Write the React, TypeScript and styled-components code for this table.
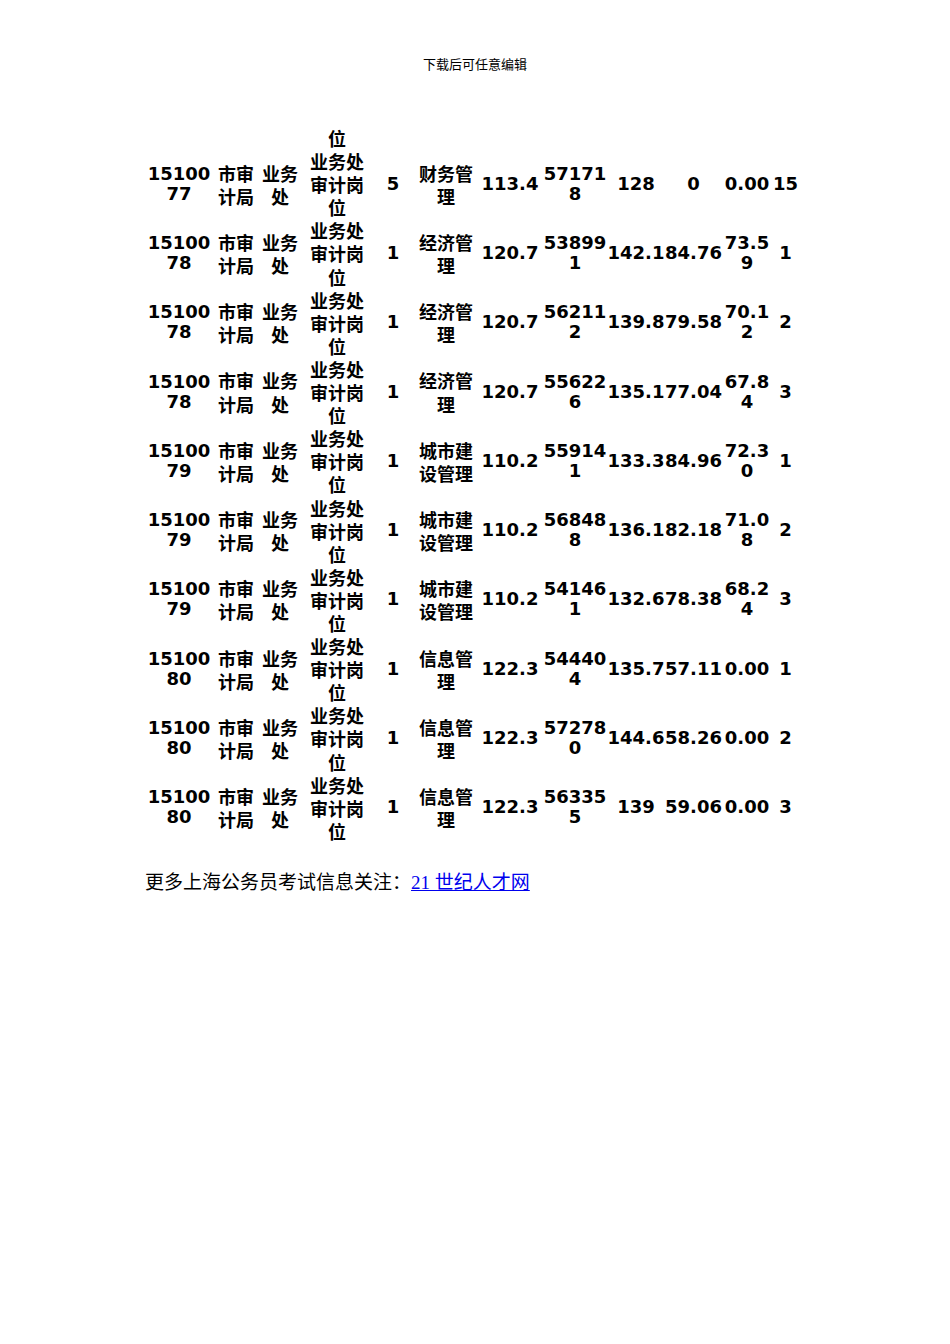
import styled, { createGlobalStyle } from "styled-components";

const GlobalStyle = createGlobalStyle`
  body {
    margin: 0;
    background: #ffffff;
    color: #000000;
  }
`;

const Page = styled.div`
  width: 950px;
  min-height: 1344px;
  background: #ffffff;
`;

const Header = styled.div`
  padding-top: 55px;
  text-align: center;
  font-family: "Noto Sans CJK SC", "DejaVu Sans", sans-serif;
  font-size: 13px;
  line-height: 18px;
`;

const Table = styled.table`
  margin: 55px 0 0 143px;
  border-collapse: collapse;
  table-layout: fixed;
  width: 656px;
  font-family: "DejaVu Sans", "Noto Sans CJK SC", sans-serif;
  font-weight: bold;
  font-size: 18px;
  line-height: 23.1px;
`;

const Col = styled.col<{ $w: number }>`
  width: ${(p) => p.$w}px;
`;

const Cell = styled.td<{ $num?: boolean }>`
  padding: 0 0 ${(p) => (p.$num ? "4px" : "0")};
  text-align: center;
  vertical-align: middle;
  word-break: break-all;
  line-height: ${(p) => (p.$num ? "20px" : "23.1px")};
`;

const Footer = styled.div`
  margin: 27px 0 0 145px;
  font-family: "Liberation Serif", "Noto Sans CJK SC", serif;
  font-size: 19px;
  line-height: 24px;
`;

const Link = styled.a`
  color: #0000ee;
  text-decoration: underline;
`;

const widths = [72, 42, 46, 68, 44, 62, 66, 64, 58, 57, 50, 27];

const rows: string[][] = [
  ["1510077", "5", "财务管理", "113.4", "571718", "128", "0", "0.00", "15"],
  ["1510078", "1", "经济管理", "120.7", "538991", "142.1", "84.76", "73.59", "1"],
  ["1510078", "1", "经济管理", "120.7", "562112", "139.8", "79.58", "70.12", "2"],
  ["1510078", "1", "经济管理", "120.7", "556226", "135.1", "77.04", "67.84", "3"],
  ["1510079", "1", "城市建设管理", "110.2", "559141", "133.3", "84.96", "72.30", "1"],
  ["1510079", "1", "城市建设管理", "110.2", "568488", "136.1", "82.18", "71.08", "2"],
  ["1510079", "1", "城市建设管理", "110.2", "541461", "132.6", "78.38", "68.24", "3"],
  ["1510080", "1", "信息管理", "122.3", "544404", "135.7", "57.11", "0.00", "1"],
  ["1510080", "1", "信息管理", "122.3", "572780", "144.6", "58.26", "0.00", "2"],
  ["1510080", "1", "信息管理", "122.3", "563355", "139", "59.06", "0.00", "3"],
];

export default function App() {
  return (
    <Page>
      <GlobalStyle />
      <Header>下载后可任意编辑</Header>
      <Table>
        <colgroup>
          {widths.map((w, i) => (
            <Col key={i} $w={w} />
          ))}
        </colgroup>
        <tbody>
          {/* tail of the row carried over from the previous page */}
          <tr>
            <Cell />
            <Cell />
            <Cell />
            <Cell>位</Cell>
            <Cell />
            <Cell />
            <Cell />
            <Cell />
            <Cell />
            <Cell />
            <Cell />
            <Cell />
          </tr>
          {rows.map((r, i) => (
            <tr key={i}>
              <Cell $num>{r[0]}</Cell>
              <Cell>市审计局</Cell>
              <Cell>业务处</Cell>
              <Cell>业务处审计岗位</Cell>
              <Cell $num>{r[1]}</Cell>
              <Cell>{r[2]}</Cell>
              {r.slice(3).map((v, j) => (
                <Cell key={j} $num>
                  {v}
                </Cell>
              ))}
            </tr>
          ))}
        </tbody>
      </Table>
      <Footer>
        更多上海公务员考试信息关注：<Link href="#">21 世纪人才网</Link>
      </Footer>
    </Page>
  );
}
